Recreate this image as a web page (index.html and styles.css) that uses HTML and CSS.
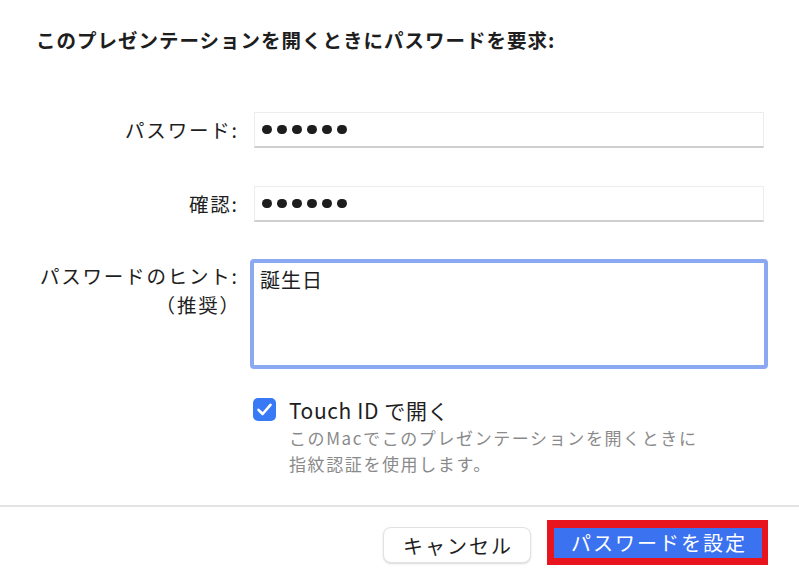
FILE: index.html
```html
<!DOCTYPE html>
<html lang="ja">
<head>
<meta charset="utf-8">
<link rel="stylesheet" href="styles.css">
</head>
<body>
<div class="dialog">
  <h1 class="title">このプレゼンテーションを開くときにパスワードを要求:</h1>
  <div class="form">
    <label class="label row1">パスワード:</label>
    <div class="field row1"><span class="dots"><i></i><i></i><i></i><i></i><i></i><i></i></span></div>
    <label class="label row2">確認:</label>
    <div class="field row2"><span class="dots"><i></i><i></i><i></i><i></i><i></i><i></i></span></div>
    <label class="label hint-label">パスワードのヒント:<br><span class="paren">（推奨）</span></label>
    <div class="textarea">誕生日</div>
    <div class="touch">
      <span class="checkbox"><svg width="23" height="23" viewBox="0 0 23 23"><path d="M5.5 11.8 L9.6 16 L17.5 6.8" fill="none" stroke="#fff" stroke-width="2.6" stroke-linecap="round" stroke-linejoin="round"/></svg></span>
      <div class="touch-text">
        <div class="touch-title">Touch ID で開く</div>
        <div class="touch-desc">このMacでこのプレゼンテーションを開くときに<br>指紋認証を使用します。</div>
      </div>
    </div>
  </div>
  <div class="footer">
    <button class="btn cancel">キャンセル</button>
    <div class="highlight"><button class="btn primary">パスワードを設定</button></div>
  </div>
</div>
</body>
</html>
```

FILE: styles.css
```css
* { box-sizing: border-box; }
html, body { margin: 0; padding: 0; background: #fff; }
body {
  font-family: "Noto Sans CJK JP", "Noto Sans", sans-serif;
  color: #222;
  width: 799px;
  height: 588px;
  overflow: hidden;
}
.dialog { width: 799px; height: 588px; display: flex; flex-direction: column; }
.title {
  margin: 0;
  padding: 26px 0 0 36px;
  font-size: 19.5px;
  line-height: 28px;
  font-weight: 700;
  color: #1e1e1e;
  letter-spacing: 1px;
}
.form {
  display: grid;
  grid-template-columns: 237px 1fr;
  column-gap: 17px;
  padding-right: 35px;
  margin-top: 58px;
}
.label {
  text-align: right;
  font-size: 19.5px;
  line-height: 36px;
  color: #1e1e1e;
  white-space: nowrap;
  letter-spacing: 1.8px;
  margin-right: -1.8px;
}
.field {
  height: 36px;
  background: #fff;
  border: 1px solid #ececec;
  border-bottom: 2px solid #cfcfcf;
  display: flex;
  align-items: center;
  padding-left: 7px;
}
.row2 { margin-top: 38px; }
.dots { display: flex; gap: 5.5px; }
.dots i { width: 9.5px; height: 9.5px; border-radius: 50%; background: #1d1d1d; display: block; }
.hint-label { margin-top: 37px; line-height: 29px; padding-top: 2px; }
.paren { margin-right: -2px; }
.textarea {
  margin-top: 37px;
  margin-left: -4px;
  margin-right: -4px;
  height: 110px;
  border: 4px solid #8aa9f2;
  border-radius: 4px;
  padding: 2px 6px;
  font-size: 20px;
  line-height: 30px;
  color: #1e1e1e;
  letter-spacing: 1px;
}
.touch {
  grid-column: 2;
  margin-top: 28px;
  display: flex;
  gap: 13px;
  margin-left: -1px;
}
.checkbox {
  width: 23px; height: 23px;
  background: #3879f5;
  border-radius: 5px;
  flex: none;
  margin-top: 1px;
}
.checkbox svg { display: block; }
.touch-title { font-size: 21px; line-height: 26px; color: #1e1e1e; letter-spacing: 0.6px; }
.touch-desc { font-size: 17px; line-height: 26px; color: #8a8a8a; margin-top: 2px; letter-spacing: 1.6px; }
.footer {
  margin-top: auto;
  border-top: 2px solid #e3e3e3;
  height: 83px;
  display: flex;
  justify-content: flex-end;
  align-items: flex-start;
  padding: 13px 31px 0 0;
  gap: 16px;
}
.btn {
  font-family: "Noto Sans CJK JP", "Noto Sans", sans-serif;
  font-size: 20px;
  border: none;
  margin: 0;
  cursor: default;
  letter-spacing: 2px;
}
.cancel {
  margin-top: 7px;
  width: 148px;
  height: 36px;
  background: #fff;
  border-radius: 8px;
  border: 1px solid #e2e2e2;
  box-shadow: 0 1px 2px rgba(0,0,0,0.15);
  color: #1e1e1e;
  padding: 0 0 0 2px;
}
.highlight {
  background: #e8151f;
  padding: 8px 6px 7px 7px;
}
.primary {
  display: block;
  width: 208px;
  height: 30px;
  background: #3a72f0;
  color: #fff;
  padding: 0 0 0 2px;
  line-height: 30px;
}
```
